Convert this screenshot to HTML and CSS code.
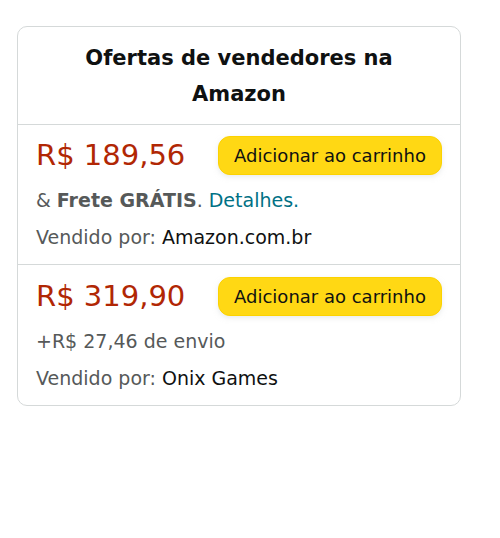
FILE: index.html
```html
<!DOCTYPE html>
<html lang="pt-BR">
<head>
    <meta charset="UTF-8">
    <meta name="viewport" content="width=device-width, initial-scale=1.0">
    <title>Ofertas de vendedores na Amazon</title>
    <link rel="stylesheet" href="styles.css">
</head>
<body>
    <div class="offers-card">
        <div class="offers-header">
            <h2>Ofertas de vendedores na Amazon</h2>
        </div>
        <div class="offer">
            <div class="offer-top">
                <span class="price">R$ 189,56</span>
                <button class="cart-btn">Adicionar ao carrinho</button>
            </div>
            <p class="offer-line">&amp; <b>Frete GRÁTIS</b>. <a href="#">Detalhes.</a></p>
            <p class="offer-line">Vendido por: <span class="seller">Amazon.com.br</span></p>
        </div>
        <div class="offer">
            <div class="offer-top">
                <span class="price">R$ 319,90</span>
                <button class="cart-btn">Adicionar ao carrinho</button>
            </div>
            <p class="offer-line">+R$ 27,46 de envio</p>
            <p class="offer-line">Vendido por: <span class="seller">Onix Games</span></p>
        </div>
    </div>
</body>
</html>
```

FILE: styles.css
```css
body {
    margin: 0;
    font-family: "DejaVu Sans", "Noto Sans", sans-serif;
    background: #fff;
    color: #0f1111;
}
.offers-card {
    width: 442px;
    margin: 26px 0 0 17px;
    border: 1px solid #d5d9d9;
    border-radius: 10px;
}
.offers-header {
    padding: 13px 40px 12px;
    border-bottom: 1px solid #d5d9d9;
    text-align: center;
}
.offers-header h2 {
    margin: 0;
    font-size: 21px;
    font-weight: 700;
    line-height: 36px;
}
.offer {
    padding: 11px 18px 15px;
}
.offer + .offer {
    border-top: 1px solid #d5d9d9;
    padding-top: 12px;
}
.offer-top {
    display: flex;
    justify-content: space-between;
    align-items: center;
}
.price {
    font-size: 29px;
    color: #b12704;
    line-height: 39px;
}
.cart-btn {
    font-family: inherit;
    font-size: 18px;
    color: #0f1111;
    background: #ffd814;
    border: 1px solid #fcd200;
    border-radius: 12px;
    height: 39px;
    width: 224px;
    padding: 0;
    box-shadow: 0 2px 5px rgba(213, 217, 217, 0.5);
    cursor: pointer;
}
.offer-line {
    margin: 13px 0 0;
    font-size: 19px;
    line-height: 24px;
    color: #565959;
}
.offer-line b {
    font-weight: 700;
}
.offer-line a {
    color: #007185;
    text-decoration: none;
}
.seller {
    color: #0f1111;
}
```
